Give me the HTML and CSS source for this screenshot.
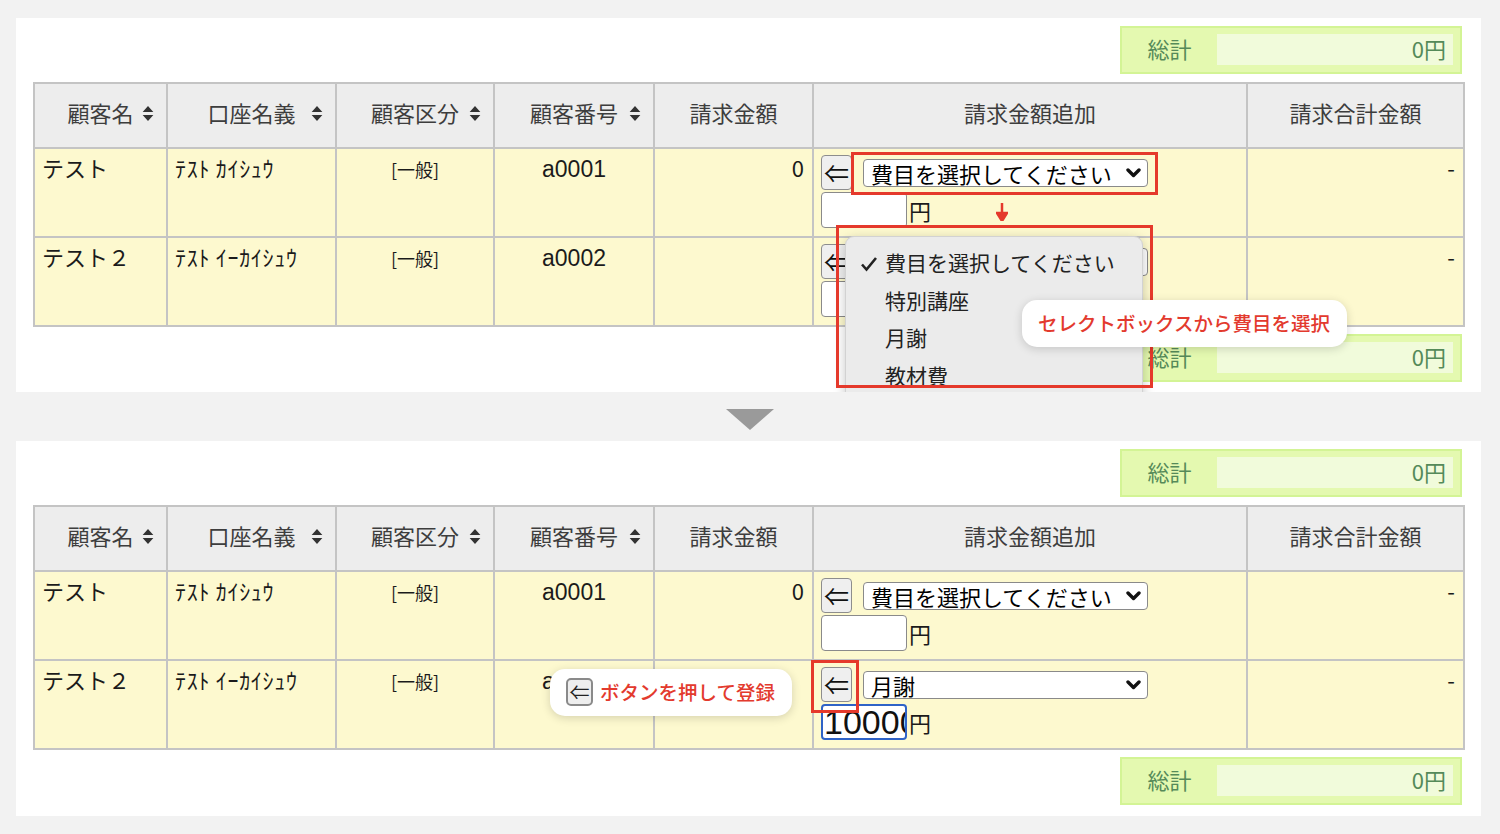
FILE: index.html
```html
<!DOCTYPE html>
<html lang="ja">
<head>
    <meta charset="UTF-8">
    <meta name="viewport" content="width=device-width, initial-scale=1.0">
    <title>請求金額追加の手順</title>
    <link rel="stylesheet" href="styles.css">
</head>
<body>
<div class="page">

    <!-- Step 1: choose an item from the select box -->
    <section class="panel">
        <div class="total">
            <span class="total-label">総計</span>
            <span class="total-value">0円</span>
        </div>

        <table class="billing">
            <colgroup>
                <col class="c-name"><col class="c-kana"><col class="c-kind"><col class="c-code">
                <col class="c-amount"><col class="c-add"><col class="c-sum">
            </colgroup>
            <thead>
                <tr>
                    <th><div class="sortable"><span class="th-text">顧客名</span><svg class="sort" viewBox="0 0 10 14"><path d="M5 0 L10 5.6 H0 Z M0 8.4 H10 L5 14 Z"/></svg></div></th>
                    <th><div class="sortable"><span class="th-text">口座名義</span><svg class="sort" viewBox="0 0 10 14"><path d="M5 0 L10 5.6 H0 Z M0 8.4 H10 L5 14 Z"/></svg></div></th>
                    <th><div class="sortable"><span class="th-text">顧客区分</span><svg class="sort" viewBox="0 0 10 14"><path d="M5 0 L10 5.6 H0 Z M0 8.4 H10 L5 14 Z"/></svg></div></th>
                    <th><div class="sortable"><span class="th-text">顧客番号</span><svg class="sort" viewBox="0 0 10 14"><path d="M5 0 L10 5.6 H0 Z M0 8.4 H10 L5 14 Z"/></svg></div></th>
                    <th>請求金額</th>
                    <th>請求金額追加</th>
                    <th>請求合計金額</th>
                </tr>
            </thead>
            <tbody>
                <tr>
                    <td>テスト</td>
                    <td class="kana">ﾃｽﾄ ｶｲｼｭｳ</td>
                    <td class="kind">[一般]</td>
                    <td class="code">a0001</td>
                    <td class="num">0</td>
                    <td class="add">
                        <div class="add-line">
                            <button class="apply">⇐</button>
                            <div class="select"><span>費目を選択してください</span><svg class="chev" viewBox="0 0 15 10"><polyline points="2,2 7.5,7.5 13,2"/></svg></div>
                        </div>
                        <div class="amount-line"><input class="amount" type="text"><span class="yen">円</span></div>
                    </td>
                    <td class="num">-</td>
                </tr>
                <tr>
                    <td>テスト２</td>
                    <td class="kana">ﾃｽﾄ ｲｰｶｲｼｭｳ</td>
                    <td class="kind">[一般]</td>
                    <td class="code">a0002</td>
                    <td class="num"></td>
                    <td class="add">
                        <div class="add-line">
                            <button class="apply">⇐</button>
                            <div class="select"><span>費目を選択してください</span><svg class="chev" viewBox="0 0 15 10"><polyline points="2,2 7.5,7.5 13,2"/></svg></div>
                        </div>
                        <div class="amount-line"><input class="amount" type="text"><span class="yen">円</span></div>
                    </td>
                    <td class="num">-</td>
                </tr>
            </tbody>
        </table>

        <div class="total total-bottom">
            <span class="total-label">総計</span>
            <span class="total-value">0円</span>
        </div>

        <!-- annotations -->
        <div class="mark mark-select"></div>
        <svg class="drop-arrow" viewBox="0 0 12 18"><line x1="6" y1="0" x2="6" y2="11"/><polygon points="1,10 11,10 6,18"/></svg>
        <ul class="menu">
            <li class="checked"><svg class="check" viewBox="0 0 18 16"><polyline points="2,8.5 6.5,13.5 16,2"/></svg>費目を選択してください</li>
            <li>特別講座</li>
            <li>月謝</li>
            <li>教材費</li>
        </ul>
        <div class="mark mark-menu"></div>
        <div class="callout callout-select">セレクトボックスから費目を選択</div>
    </section>

    <div class="divider"><span class="triangle"></span></div>

    <!-- Step 2: press the button -->
    <section class="panel panel-second">
        <div class="total">
            <span class="total-label">総計</span>
            <span class="total-value">0円</span>
        </div>

        <table class="billing">
            <colgroup>
                <col class="c-name"><col class="c-kana"><col class="c-kind"><col class="c-code">
                <col class="c-amount"><col class="c-add"><col class="c-sum">
            </colgroup>
            <thead>
                <tr>
                    <th><div class="sortable"><span class="th-text">顧客名</span><svg class="sort" viewBox="0 0 10 14"><path d="M5 0 L10 5.6 H0 Z M0 8.4 H10 L5 14 Z"/></svg></div></th>
                    <th><div class="sortable"><span class="th-text">口座名義</span><svg class="sort" viewBox="0 0 10 14"><path d="M5 0 L10 5.6 H0 Z M0 8.4 H10 L5 14 Z"/></svg></div></th>
                    <th><div class="sortable"><span class="th-text">顧客区分</span><svg class="sort" viewBox="0 0 10 14"><path d="M5 0 L10 5.6 H0 Z M0 8.4 H10 L5 14 Z"/></svg></div></th>
                    <th><div class="sortable"><span class="th-text">顧客番号</span><svg class="sort" viewBox="0 0 10 14"><path d="M5 0 L10 5.6 H0 Z M0 8.4 H10 L5 14 Z"/></svg></div></th>
                    <th>請求金額</th>
                    <th>請求金額追加</th>
                    <th>請求合計金額</th>
                </tr>
            </thead>
            <tbody>
                <tr>
                    <td>テスト</td>
                    <td class="kana">ﾃｽﾄ ｶｲｼｭｳ</td>
                    <td class="kind">[一般]</td>
                    <td class="code">a0001</td>
                    <td class="num">0</td>
                    <td class="add">
                        <div class="add-line">
                            <button class="apply">⇐</button>
                            <div class="select"><span>費目を選択してください</span><svg class="chev" viewBox="0 0 15 10"><polyline points="2,2 7.5,7.5 13,2"/></svg></div>
                        </div>
                        <div class="amount-line"><input class="amount" type="text"><span class="yen">円</span></div>
                    </td>
                    <td class="num">-</td>
                </tr>
                <tr>
                    <td>テスト２</td>
                    <td class="kana">ﾃｽﾄ ｲｰｶｲｼｭｳ</td>
                    <td class="kind">[一般]</td>
                    <td class="code">a0002</td>
                    <td class="num"></td>
                    <td class="add">
                        <div class="add-line">
                            <button class="apply">⇐</button>
                            <div class="select"><span>月謝</span><svg class="chev" viewBox="0 0 15 10"><polyline points="2,2 7.5,7.5 13,2"/></svg></div>
                        </div>
                        <div class="amount-line"><input class="amount amount-focus" type="text" value="10000"><span class="yen">円</span></div>
                    </td>
                    <td class="num">-</td>
                </tr>
            </tbody>
        </table>

        <div class="total total-bottom">
            <span class="total-label">総計</span>
            <span class="total-value">0円</span>
        </div>

        <!-- annotations -->
        <div class="mark mark-button"></div>
        <div class="callout callout-button"><span class="mini-btn">⇐</span>ボタンを押して登録</div>
    </section>

</div>
</body>
</html>
```

FILE: styles.css
```css
* {
    margin: 0;
    padding: 0;
    box-sizing: border-box;
}

body {
    background-color: #f2f2f2;
    font-family: "Noto Sans CJK JP", sans-serif;
    color: #1b1b1b;
}

.page {
    padding-top: 18px;
}

.panel {
    position: relative;
    width: 1465px;
    margin-left: 16px;
    padding: 8px 18px 10px 17px;
    background-color: #fff;
    overflow: hidden;
}

.panel-second {
    padding-bottom: 11px;
}

/* 総計 box */
.total {
    display: flex;
    width: 342px;
    height: 48px;
    margin: 0 1px 8px auto;
    padding: 6px 7px 7px 0;
    border: 2px solid #d3f495;
    background-color: #e4f9b0;
    color: #558a59;
    font-size: 22px;
}

.total-bottom {
    margin-bottom: 0;
}

.total-label {
    width: 95px;
    text-align: center;
    line-height: 29px;
}

.total-value {
    flex: 1;
    padding-right: 7px;
    text-align: right;
    line-height: 29px;
    background-color: #f1fbdb;
}

/* table */
.billing {
    width: 1430px;
    border-collapse: collapse;
    table-layout: fixed;
    margin-bottom: 7px;
}

.c-name { width: 133px; }
.c-kana { width: 169px; }
.c-kind { width: 158px; }
.c-code { width: 160px; }
.c-amount { width: 159px; }
.c-add { width: 434px; }
.c-sum { width: 217px; }

.billing th,
.billing td {
    border: 2px solid #c4c4c4;
}

.billing thead tr {
    height: 65px;
}

.billing tbody tr {
    height: 89px;
}

.billing th {
    padding: 0 12px 8px;
    background-color: #ededed;
    color: #3d3d3d;
    font-size: 22px;
    font-weight: normal;
    text-align: center;
}

.sortable {
    display: grid;
    grid-template-columns: 1fr auto 1fr;
    align-items: center;
}

.th-text {
    grid-column: 2;
}

.sort {
    grid-column: 3;
    justify-self: end;
    width: 12px;
    height: 15px;
    margin-top: 4px;
    fill: #333;
}

.billing td {
    padding: 3px 7px 6px;
    background-color: #fdf9cf;
    vertical-align: top;
    font-size: 22px;
    line-height: 30px;
}

.billing td.kana {
    font-size: 22px;
    letter-spacing: 0.7px;
}

.billing td.kind {
    padding-top: 5px;
    text-align: center;
    font-size: 18px;
}

.billing td.code {
    padding-top: 5px;
    text-align: center;
    font-family: "Liberation Sans", "Noto Sans CJK JP", sans-serif;
    font-size: 23px;
}

.billing td.num {
    padding-right: 8px;
    text-align: right;
}

.billing td.add {
    padding-top: 6px;
}

/* 請求金額追加 controls */
.add-line {
    display: flex;
    align-items: center;
    gap: 11px;
}

.apply {
    display: flex;
    align-items: center;
    justify-content: center;
    width: 31px;
    height: 35px;
    border: 1px solid #8d8d8d;
    border-radius: 4px;
    background-color: #efefef;
    color: #111;
    font-family: "Noto Sans CJK JP", sans-serif;
    font-size: 25px;
    line-height: 1;
}

.select {
    display: flex;
    align-items: center;
    justify-content: space-between;
    width: 285px;
    height: 28px;
    padding: 0 6px 0 7px;
    border: 1px solid #8a8a8a;
    border-radius: 4px;
    background-color: #fff;
    color: #000;
    font-size: 22px;
    line-height: 1;
}

.chev {
    width: 15px;
    height: 10px;
    fill: none;
    stroke: #111;
    stroke-width: 3.4;
    stroke-linecap: round;
    stroke-linejoin: round;
}

.amount-line {
    display: flex;
    align-items: center;
    margin-top: 2px;
}

.amount {
    width: 86px;
    height: 36px;
    padding: 0 0 0 1px;
    border: 1px solid #8a8a8a;
    border-radius: 4px;
    background-color: #fff;
    font-family: "Liberation Sans", sans-serif;
    font-size: 34px;
    color: #111;
    outline: none;
}

.amount-focus {
    border: 2px solid #2f63c7;
}

.yen {
    margin-left: 2px;
    font-size: 22px;
}

/* annotations */
.mark {
    position: absolute;
    border: 3px solid #e5392b;
}

.mark-select {
    left: 835px;
    top: 134px;
    width: 307px;
    height: 43px;
}

.mark-menu {
    left: 820px;
    top: 207px;
    width: 317px;
    height: 163px;
}

.mark-button {
    left: 795px;
    top: 219px;
    width: 48px;
    height: 53px;
}

.drop-arrow {
    position: absolute;
    left: 980px;
    top: 185px;
    width: 12px;
    height: 18px;
    fill: #e5392b;
    stroke: #e5392b;
    stroke-width: 2.5;
}

.menu {
    position: absolute;
    left: 829px;
    top: 218px;
    width: 298px;
    height: 190px;
    padding-top: 8px;
    list-style: none;
    background-color: #ebebeb;
    border: 1px solid #d2d2d2;
    border-radius: 9px;
    box-shadow: 0 3px 12px rgba(0, 0, 0, 0.22);
}

.menu li {
    position: relative;
    height: 37.5px;
    padding-left: 39px;
    line-height: 35px;
    font-size: 21px;
    color: #222;
}

.check {
    position: absolute;
    left: 14px;
    top: 11px;
    width: 18px;
    height: 16px;
    fill: none;
    stroke: #222;
    stroke-width: 2.6;
}

.callout {
    position: absolute;
    display: flex;
    align-items: center;
    height: 47px;
    padding: 0 17px 2px 16px;
    border-radius: 15px;
    background-color: #fff;
    box-shadow: 0 2px 10px rgba(0, 0, 0, 0.16);
    color: #e33a2e;
    font-size: 19.5px;
    font-weight: 500;
    white-space: nowrap;
}

.callout-select {
    left: 1006px;
    top: 282px;
}

.callout-button {
    left: 534px;
    top: 228px;
    gap: 7px;
}

.mini-btn {
    display: flex;
    align-items: center;
    justify-content: center;
    width: 27px;
    height: 28px;
    border: 2px solid #8a8a8a;
    border-radius: 5px;
    background-color: #eee;
    color: #222;
    font-family: "Noto Sans CJK JP", sans-serif;
    font-size: 20px;
    font-weight: normal;
    line-height: 1;
}

/* arrow between the two steps */
.divider {
    display: flex;
    justify-content: center;
    height: 49px;
    padding-top: 17px;
}

.triangle {
    width: 0;
    height: 0;
    border-left: 24px solid transparent;
    border-right: 24px solid transparent;
    border-top: 21px solid #9a9a9a;
}
```
